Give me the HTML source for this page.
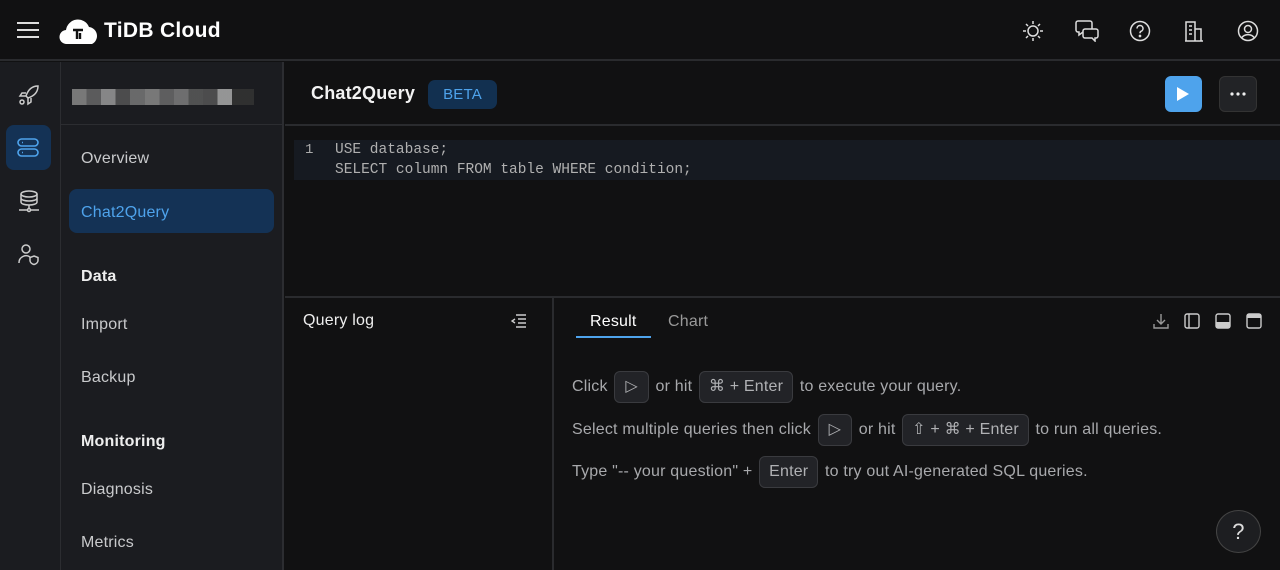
<!DOCTYPE html>
<html><head><meta charset="utf-8"><style>
*{box-sizing:border-box;margin:0;padding:0}
body{width:1280px;height:570px;overflow:hidden;background:#111112;font-family:"Liberation Sans",sans-serif;color:#c9cacc;position:relative;letter-spacing:0.2px}
.abs{position:absolute}
.top{left:0;top:0;width:1280px;height:61px;background:#111112;border-bottom:2px solid #2a2b2e}
.rail{left:0;top:62px;width:61px;height:508px;background:#1b1c20;border-right:1px solid #2c2d31}
.nav{left:61px;top:62px;width:223px;height:508px;background:#1b1c20;border-right:2px solid #2c2d31}
.nav .it{position:absolute;left:20px;font-size:16px;color:#c9cacc}
.nav .h{position:absolute;left:20px;font-size:16px;font-weight:bold;color:#eee}
.kbd{display:inline-block;border:1px solid #3a3b3f;background:#222327;border-radius:6px;height:32px;line-height:30px;padding:0 9px;vertical-align:middle;color:#b0b1b4;margin:0 2px}
.line{position:absolute;left:572px;font-size:16px;color:#a8a9ac;white-space:nowrap}
svg{position:absolute}
</style></head><body>
<div class="abs top"></div>
<svg style="left:17px;top:21px" width="22" height="18" viewBox="0 0 22 18"><path d="M0 2h22M0 9h22M0 16h22" stroke="#ddd" stroke-width="2"/></svg>
<svg style="left:59px;top:16px" width="40" height="30" viewBox="0 0 40 30"><path d="M8 28a7 7 0 0 1-1-14 12 12 0 0 1 23-3 9 9 0 0 1 3 17z" fill="#fff"/><path d="M14 14h10M18 14v9M21 17v6" stroke="#111" stroke-width="2.4" fill="none"/></svg>
<div class="abs" style="left:104px;top:19px;font-size:21px;font-weight:bold;color:#fff;letter-spacing:0.3px">TiDB Cloud</div>
<svg style="left:1022px;top:20px" width="22" height="22" viewBox="0 0 22 22" fill="none" stroke="#ddd" stroke-width="1.5"><circle cx="11" cy="11" r="5"/><path d="M11 1v3M11 18v3M1 11h3M18 11h3M4 4l2 2M16 16l2 2M4 18l2-2M16 6l2-2"/></svg>
<svg style="left:1075px;top:20px" width="24" height="22" viewBox="0 0 24 22" fill="none" stroke="#ddd" stroke-width="1.5"><path d="M3 1h12a2 2 0 0 1 2 2v7a2 2 0 0 1-2 2H8l-4 3v-3H3a2 2 0 0 1-2-2V3a2 2 0 0 1 2-2z"/><path d="M10 9h11a2 2 0 0 1 2 2v5a2 2 0 0 1-2 2h-1v3l-3-3h-7a2 2 0 0 1-2-2v-5a2 2 0 0 1 2-2z" fill="#111"/></svg>
<svg style="left:1129px;top:20px" width="22" height="22" viewBox="0 0 22 22" fill="none" stroke="#ddd" stroke-width="1.5"><circle cx="11" cy="11" r="9.5"/><path d="M8 8.5a3 3 0 1 1 4 2.8c-.8.4-1 1-1 2"/><circle cx="11" cy="16" r=".6" fill="#ddd"/></svg>
<svg style="left:1184px;top:20px" width="20" height="22" viewBox="0 0 20 22" fill="none" stroke="#ddd" stroke-width="1.5"><path d="M1 21h18M2 21V2h9v19M11 9h6v12M5 6h3M5 10h3M5 14h3"/></svg>
<svg style="left:1237px;top:20px" width="22" height="22" viewBox="0 0 22 22" fill="none" stroke="#ddd" stroke-width="1.5"><circle cx="11" cy="11" r="9.5"/><circle cx="11" cy="9" r="3.5"/><path d="M4.5 18a8 8 0 0 1 13 0"/></svg>

<div class="abs rail"></div>
<svg style="left:18px;top:84px" width="22" height="22" viewBox="0 0 22 22" fill="none" stroke="#ccc" stroke-width="1.5"><path d="M20 2c-6 0-10 4-12 10l2 2c6-2 10-6 10-12zM8 9H4l-2 3h6M13 14v4l-3 2v-6"/><circle cx="4" cy="18" r="2"/></svg>
<div class="abs" style="left:6px;top:125px;width:45px;height:45px;background:#143255;border-radius:8px"></div>
<svg style="left:17px;top:138px" width="22" height="20" viewBox="0 0 22 20" fill="none" stroke="#4ea3ec" stroke-width="1.6"><rect x="1" y="1" width="20" height="7" rx="3.5"/><rect x="1" y="11" width="20" height="7" rx="3.5"/><path d="M5 4.5h1M5 14.5h1"/></svg>
<svg style="left:18px;top:190px" width="22" height="24" viewBox="0 0 22 24" fill="none" stroke="#ccc" stroke-width="1.5"><ellipse cx="11" cy="4" rx="8" ry="3"/><path d="M3 4v8c0 2 4 3 8 3s8-1 8-3V4M3 8c0 2 4 3 8 3s8-1 8-3M11 15v5M1 20h20"/><circle cx="11" cy="20" r="1.5" fill="#1b1c20"/></svg>
<svg style="left:18px;top:244px" width="22" height="22" viewBox="0 0 22 22" fill="none" stroke="#ccc" stroke-width="1.5"><circle cx="8" cy="5" r="4"/><path d="M1 19a7 7 0 0 1 11-6"/><path d="M16 12l4 1.5v3c0 2-2 3.5-4 4-2-.5-4-2-4-4v-3z"/></svg>

<div class="abs nav">
<div style="position:absolute;left:11px;top:27px;width:182px;height:16px;background:linear-gradient(90deg,#888 0 8%,#666 8% 16%,#999 16% 24%,#555 24% 32%,#777 32% 40%,#888 40% 48%,#6a6a6a 48% 56%,#7d7d7d 56% 64%,#5a5a5a 64% 72%,#555 72% 80%,#aaa 80% 88%,#333 88%);opacity:.85"></div>
<div style="position:absolute;left:0;top:62px;width:223px;height:1px;background:#2c2d31"></div>
<div class="it" style="top:88px">Overview</div>
<div style="position:absolute;left:8px;top:127px;width:205px;height:44px;background:#143255;border-radius:8px"></div>
<div class="it" style="top:142px;color:#4ea3ec">Chat2Query</div>
<div class="h" style="top:206px">Data</div>
<div class="it" style="top:254px">Import</div>
<div class="it" style="top:307px">Backup</div>
<div class="h" style="top:371px">Monitoring</div>
<div class="it" style="top:419px">Diagnosis</div>
<div class="it" style="top:472px">Metrics</div>
</div>

<div class="abs" style="left:311px;top:83px;font-size:18px;font-weight:bold;color:#f2f2f2">Chat2Query</div>
<div class="abs" style="left:428px;top:80px;width:69px;height:29px;background:#123050;border-radius:7px;color:#4ea3ec;font-size:15px;line-height:29px;text-align:center">BETA</div>
<div class="abs" style="left:1165px;top:76px;width:37px;height:36px;background:#4ea3ec;border-radius:6px"></div>
<svg style="left:1176px;top:86px" width="14" height="16" viewBox="0 0 14 16"><path d="M1 1l12 7-12 7z" fill="#fff"/></svg>
<div class="abs" style="left:1219px;top:76px;width:38px;height:36px;background:#222326;border:1px solid #333;border-radius:6px"></div>
<svg style="left:1230px;top:92px" width="16" height="4" viewBox="0 0 16 4"><circle cx="2" cy="2" r="1.6" fill="#eee"/><circle cx="8" cy="2" r="1.6" fill="#eee"/><circle cx="14" cy="2" r="1.6" fill="#eee"/></svg>
<div class="abs" style="left:285px;top:124px;width:995px;height:2px;background:#2a2b2e"></div>
<div class="abs" style="left:294px;top:140px;width:986px;height:40px;background:#161a21"></div>
<div class="abs" style="left:305px;top:142px;font-family:'Liberation Mono',monospace;font-size:14px;color:#aaa;letter-spacing:0">1</div>
<div class="abs" style="left:335px;top:140px;font-family:'Liberation Mono',monospace;font-size:14.5px;color:#b0b0b0;line-height:20px;letter-spacing:0">USE database;<br>SELECT column FROM table WHERE condition;</div>

<div class="abs" style="left:285px;top:296px;width:995px;height:2px;background:#2a2b2e"></div>
<div class="abs" style="left:552px;top:298px;width:2px;height:272px;background:#2a2b2e"></div>
<div class="abs" style="left:303px;top:312px;font-size:16px;color:#eee">Query log</div>
<svg style="left:511px;top:314px" width="16" height="14" viewBox="0 0 16 14" fill="none" stroke="#ccc" stroke-width="1.4"><path d="M5 1h10M7 5h8M7 9h8M5 13h10M4 5L1 7l3 2"/></svg>
<div class="abs" style="left:590px;top:313px;font-size:16px;color:#fff">Result</div>
<div class="abs" style="left:576px;top:336px;width:75px;height:2px;background:#4ea3ec"></div>
<div class="abs" style="left:668px;top:313px;font-size:16px;color:#999">Chart</div>
<svg style="left:1153px;top:313px" width="16" height="16" viewBox="0 0 16 16" fill="none" stroke="#999" stroke-width="1.4"><path d="M8 1v9M4 7l4 4 4-4M1 11v4h14v-4"/></svg>
<svg style="left:1184px;top:313px" width="16" height="16" viewBox="0 0 16 16" fill="none" stroke="#ccc" stroke-width="1.4"><rect x="1" y="1" width="14" height="14" rx="2"/><path d="M5 1v14"/></svg>
<svg style="left:1215px;top:313px" width="16" height="16" viewBox="0 0 16 16"><rect x="1" y="1" width="14" height="14" rx="2" fill="none" stroke="#ccc" stroke-width="1.4"/><rect x="1" y="9" width="14" height="6" fill="#ccc"/></svg>
<svg style="left:1246px;top:313px" width="16" height="16" viewBox="0 0 16 16"><rect x="1" y="1" width="14" height="14" rx="2" fill="none" stroke="#ccc" stroke-width="1.4"/><rect x="1" y="1" width="14" height="4" fill="#ccc"/></svg>

<div class="line" style="top:371px">Click <span class="kbd" style="padding:0 10px">▷</span> or hit <span class="kbd">⌘ + Enter</span> to execute your query.</div>
<div class="line" style="top:414px">Select multiple queries then click <span class="kbd" style="padding:0 10px">▷</span> or hit <span class="kbd">⇧ + ⌘ + Enter</span> to run all queries.</div>
<div class="line" style="top:456px">Type "-- your question" + <span class="kbd">Enter</span> to try out AI-generated SQL queries.</div>

<div class="abs" style="left:1216px;top:510px;width:45px;height:43px;border-radius:50%;background:#1d1e21;border:1px solid #444;color:#ddd;font-size:22px;text-align:center;line-height:41px">?</div>
</body></html>
